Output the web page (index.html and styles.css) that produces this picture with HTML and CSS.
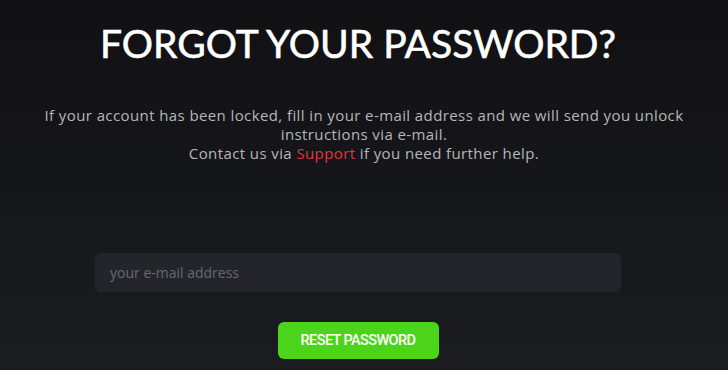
FILE: index.html
```html
<!DOCTYPE html>
<html lang="en">
<head>
<meta charset="utf-8">
<title>Forgot your password?</title>
<link rel="stylesheet" href="styles.css">
</head>
<body>
<main class="page">
  <h1 class="title">FORGOT YOUR PASSWORD?</h1>
  <p class="intro">If your account has been locked, fill in your e-mail address and we will send you unlock instructions via e-mail.<br>Contact us via <a class="link" href="#">Support</a> if you need further help.</p>
  <form class="form">
    <input class="field" type="email" placeholder="your e-mail address">
    <button class="btn" type="button">RESET PASSWORD</button>
  </form>
</main>
</body>
</html>
```
FILE: styles.css
```css
html, body {
  margin: 0;
  height: 100%;
}
body {
  background: linear-gradient(180deg, #111114 0%, #1b1c20 100%);
  font-family: "Open Sans", Lato, sans-serif;
  color: #fff;
  overflow: hidden;
}
.page {
  box-sizing: border-box;
  width: 728px;
  padding: 21px 12px 0 0;
  display: flex;
  flex-direction: column;
  align-items: center;
}
.title {
  margin: 0;
  font-family: Lato, sans-serif;
  font-size: 39px;
  font-weight: 400;
  line-height: 44px;
  -webkit-text-stroke: 0.6px #fff;
}
.intro {
  margin: 41px 0 0 12px;
  width: 680px;
  text-align: center;
  font-size: 15px;
  line-height: 19px;
  letter-spacing: 0.4px;
  color: #b6b6ba;
}
.link {
  color: #e8323c;
  text-decoration: none;
}
.form {
  margin-top: 90px;
  display: flex;
  flex-direction: column;
  align-items: center;
  gap: 30px;
}
.field {
  box-sizing: border-box;
  width: 526px;
  height: 39px;
  border: none;
  border-radius: 6px;
  background: #24252b;
  padding: 0 15px;
  font-family: inherit;
  font-size: 14px;
  color: #ddd;
  outline: none;
}
.field::placeholder {
  color: #676872;
}
.btn {
  width: 161px;
  height: 37px;
  border: none;
  border-radius: 6px;
  background: #4cd41a;
  color: #fff;
  font-family: Roboto, sans-serif;
  font-size: 14.5px;
  font-weight: 500;
  letter-spacing: -0.6px;
  padding: 0;
}
```
